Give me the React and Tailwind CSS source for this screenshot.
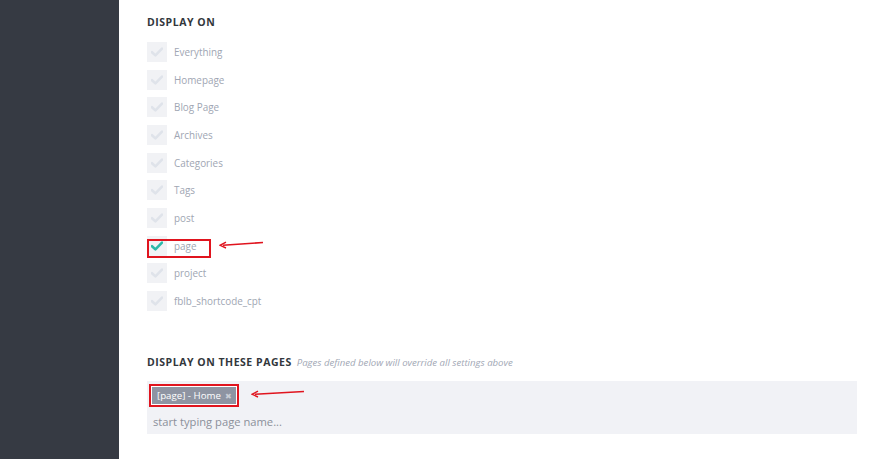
import React from "react";

const options = [
  { label: "Everything", checked: false },
  { label: "Homepage", checked: false },
  { label: "Blog Page", checked: false },
  { label: "Archives", checked: false },
  { label: "Categories", checked: false },
  { label: "Tags", checked: false },
  { label: "post", checked: false },
  { label: "page", checked: true },
  { label: "project", checked: false },
  { label: "fblb_shortcode_cpt", checked: false },
];

const Check = ({ on }) => (
  <svg width="12" height="10" viewBox="0 0 12 10">
    <path
      d="M1 5.2 L4.4 8.4 L11 1.6"
      fill="none"
      stroke={on ? "#2cb9a9" : "#dfe3ea"}
      strokeWidth="2.6"
      strokeLinecap="round"
      strokeLinejoin="round"
    />
  </svg>
);

const Arrow = ({ className, width = 46 }) => (
  <svg className={className} width={width} height="8" viewBox={`0 0 ${width} 8`}>
    <path d={`M${width - 1} 1.5 L4 4.2`} stroke="#e0141e" strokeWidth="1.6" fill="none" />
    <path d="M7 1.2 L1 4.3 L7 7" stroke="#e0141e" strokeWidth="1.4" fill="none" />
  </svg>
);

export default function App() {
  return (
    <div className="flex w-[880px] h-[459px] bg-white font-['Open_Sans',sans-serif] overflow-hidden">
      {/* Sidebar */}
      <div className="w-[119px] shrink-0 bg-[#363a43]" />

      {/* Content */}
      <div className="flex-1 pl-[28px] pr-[23px] pt-[14px]">
        <h3 className="text-[10.5px] font-bold tracking-[0.05em] text-[#32373c] leading-[16px]">
          DISPLAY ON
        </h3>

        <div className="mt-[12px] flex flex-col">
          {options.map((o) => (
            <div key={o.label} className="relative h-[27.67px] flex items-start">
              <div className="flex items-center gap-[7px]">
                <div className="w-[20px] h-[20px] bg-[#f1f2f5] flex items-center justify-center">
                  <Check on={o.checked} />
                </div>
                <span className="text-[9.9px] text-[#a0a6b3] leading-[20px]">{o.label}</span>
              </div>
              {o.checked && (
                <>
                  <div className="absolute left-0 top-[3px] w-[64px] h-[19px] border-2 border-[#e0141e]" />
                  <Arrow className="absolute left-[72px] top-[5px]" width={45} />
                </>
              )}
            </div>
          ))}
        </div>

        <div className="mt-[35px] flex items-baseline gap-[5px]">
          <h3 className="text-[10.5px] font-bold tracking-[0.05em] text-[#32373c] leading-[16px]">
            DISPLAY ON THESE PAGES
          </h3>
          <span className="text-[9.6px] italic text-[#a2a8b5]">
            Pages defined below will override all settings above
          </span>
        </div>

        <div className="mt-[11px] bg-[#f1f2f6] h-[53px] pl-[2px] pt-[3px]">
          <div className="flex items-center">
            <div className="border-2 border-[#e0141e] p-[1px] bg-white">
              <div className="bg-[#8e94a2] h-[17px] pl-[5px] pr-[4px] flex items-center gap-[4px] text-[9.7px] text-white leading-[17px]">
                <span>[page] - Home</span>
                <span className="text-[#c9cdd5] text-[8px]">✖</span>
              </div>
            </div>
            <Arrow className="ml-[12px] -mt-[2px]" width={54} />
          </div>
          <div className="mt-[7px] pl-[4px] text-[11.2px] text-[#8b909a] leading-[16px]">
            start typing page name...
          </div>
        </div>
      </div>
    </div>
  );
}
